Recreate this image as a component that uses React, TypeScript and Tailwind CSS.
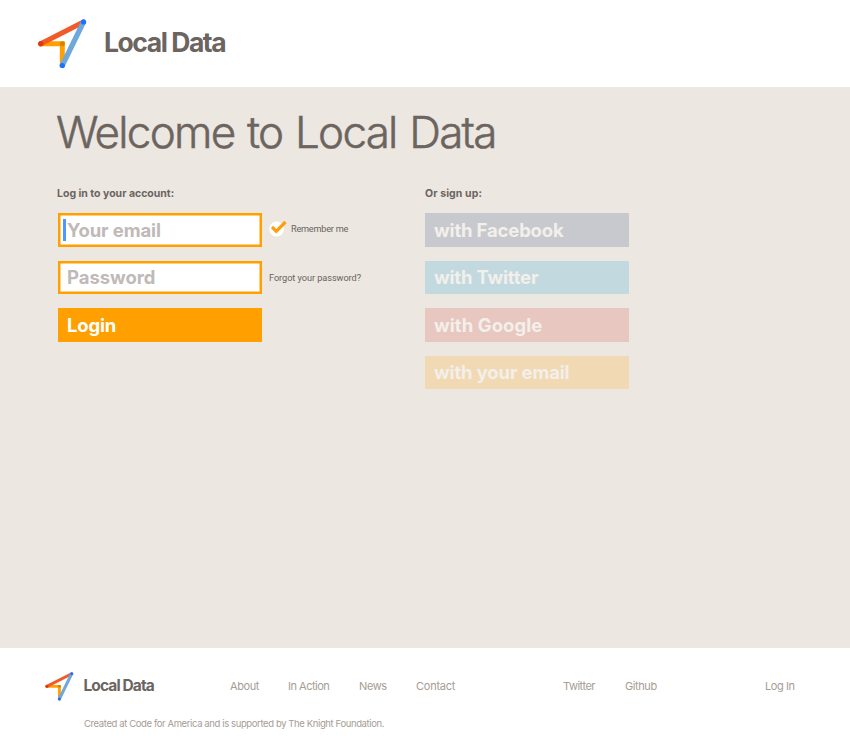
import React from "react";

function Arrow({ className }: { className: string }) {
  return (
    <svg viewBox="0 0 49 50" className={className} fill="none" strokeLinecap="round">
      <path d="M3 24.7H24.3V46" stroke="#ffa000" strokeWidth="5" />
      <path d="M2.8 24.7 45.5 3" stroke="#f15a29" strokeWidth="5.2" />
      <path d="M45.5 3 24.3 46.5" stroke="#6fa8dc" strokeWidth="5.2" />
      <circle cx="24.3" cy="24.7" r="2.5" fill="#d98200" />
      <circle cx="2.8" cy="24.7" r="2.6" fill="#e03a0c" />
      <circle cx="45.5" cy="3" r="2.6" fill="#1a73ff" />
      <circle cx="24.3" cy="46.5" r="2.6" fill="#1a73ff" />
    </svg>
  );
}

const signups = [
  { label: "with Facebook", style: "bg-[#c8c9cf] tracking-[-0.17px]" },
  { label: "with Twitter", style: "bg-[#c2d9df] tracking-[-0.2px]" },
  { label: "with Google", style: "bg-[#e8c7c0] tracking-[0.05px]" },
  { label: "with your email", style: "bg-[#f1d9b3] tracking-[-0.15px]" },
];

export default function App() {
  return (
    <div className="flex h-[753px] w-[850px] flex-col overflow-hidden whitespace-nowrap bg-white font-['Inter',sans-serif] text-[#6b645f]">
      <header className="flex h-[87px] shrink-0 items-start pl-[38px] pt-[19px]">
        <Arrow className="h-[50px] w-[49px]" />
        <span className="ml-[17px] mt-[7px] text-[26.5px] font-bold leading-8 tracking-[-1.45px]">Local Data</span>
      </header>

      <main className="h-[561px] shrink-0 bg-[#ece7e1] pl-[57px] pt-[20px]">
        <h1 className="-ml-px h-[50px] text-[44px] font-light leading-[50px] tracking-[-1.75px] [-webkit-text-stroke:0.5px_#6b645f] [word-spacing:2px]">Welcome to Local Data</h1>
        <div className="flex pt-[28px]">
          <section className="w-[368px]">
            <h2 className="h-4 pt-px text-[10.5px] font-bold leading-4">Log in to your account:</h2>
            <div className="ml-px mt-[12.3px] flex flex-col gap-[14.3px]">
              <div className="flex items-center">
                <div className="flex h-[33.3px] w-[204px] items-center border-2 border-[#ffa000] bg-white pl-[3px] shadow-[inset_0_0_0_0.5px_#ffa000]">
                  <span className="h-[22px] w-[3px] bg-[#4d99ff]" />
                  <span className="ml-px mt-px text-[18.5px] font-bold tracking-[-0.1px] text-[#bfbab8]">Your email</span>
                </div>
                <svg viewBox="0 0 20 18" className="-mt-[3px] ml-[7px] h-[18px] w-[20px]" fill="none">
                  <circle cx="7.6" cy="10" r="7.4" fill="#fff" />
                  <path d="m3 8 4.3 4.3L16.5 3" stroke="#ff9d0a" strokeWidth="3.2" />
                </svg>
                <span className="-mt-[2px] ml-[2px] font-['Roboto',sans-serif] text-[9.2px] tracking-[-0.25px]">Remember me</span>
              </div>
              <div className="flex items-center">
                <div className="flex h-[33.3px] w-[204px] items-center border-2 border-[#ffa000] bg-white pl-[7px] shadow-[inset_0_0_0_0.5px_#ffa000]">
                  <span className="text-[18.5px] font-bold tracking-[-0.05px] text-[#bfbab8]">Password</span>
                </div>
                <span className="ml-[7px] font-['Roboto',sans-serif] text-[9.2px] tracking-[-0.06px]">Forgot your password?</span>
              </div>
              <button className="flex h-[33.3px] w-[204px] items-center bg-[#ffa000] pl-[9px] pt-px text-[18.5px] font-bold tracking-[-0.2px] text-white">Login</button>
            </div>
          </section>
          <section>
            <h2 className="h-4 pt-px text-[10.5px] font-bold leading-4 tracking-[0.1px]">Or sign up:</h2>
            <div className="mt-[12.3px] flex flex-col gap-[14.3px]">
              {signups.map((s) => (
                <button key={s.label} className={`flex h-[33.3px] w-[204px] items-center pl-[9px] pt-px text-[18.5px] font-bold text-[#f3efea] ${s.style}`}>
                  {s.label}
                </button>
              ))}
            </div>
          </section>
        </div>
      </main>

      <footer className="flex-1 pl-[45px] pt-[23px] text-[#a69d95]">
        <div className="flex h-[30px] items-center">
          <Arrow className="h-[29px] w-[29px]" />
          <span className="ml-[9.5px] w-[146.5px] text-[15.5px] font-bold tracking-[-0.9px] text-[#6b645f]">Local Data</span>
          <nav className="flex text-[11px] leading-4 tracking-[-0.4px]">
            <span className="w-[58px]">About</span>
            <span className="w-[71px] tracking-[-0.5px]">In Action</span>
            <span className="w-[57px]">News</span>
            <span className="w-[147px] tracking-[-0.25px]">Contact</span>
            <span className="w-[62px] tracking-[-0.5px]">Twitter</span>
            <span className="w-[140px]">Github</span>
            <span>Log In</span>
          </nav>
        </div>
        <p className="ml-[39px] mt-[15px] text-[9.5px] leading-4 tracking-[-0.39px]">Created at Code for America and is supported by The Knight Foundation.</p>
      </footer>
    </div>
  );
}
